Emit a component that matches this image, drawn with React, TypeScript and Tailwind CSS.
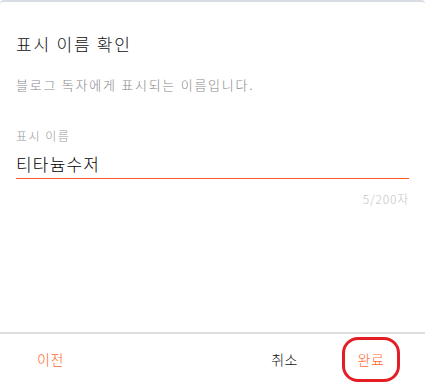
import React from "react";

const font = { fontFamily: '"Noto Sans CJK KR", "Noto Sans", sans-serif' };

export default function App() {
  return (
    <div
      className="w-[425px] h-[384px] bg-white flex flex-col overflow-hidden rounded-t-[4px] border-t-2 border-[#d8dde3]"
      style={font}
    >
      {/* Body */}
      <div className="flex-1 flex flex-col px-4">
        <h2 className="mt-[30px] text-[17px] leading-6 tracking-[1.8px] font-light text-[#111]">
          표시 이름 확인
        </h2>
        <p className="mt-[19px] text-[13px] leading-5 tracking-[1.75px] font-light text-[#888]">
          블로그 독자에게 표시되는 이름입니다.
        </p>

        <label className="mt-[33px] text-[12px] leading-4 tracking-[1.5px] font-light text-[#999]">
          표시 이름
        </label>
        <div className="mt-[8px] border-b border-[#ff5722] pb-[2px]">
          <div className="text-[17px] leading-6 tracking-[1.2px] font-light text-black">티타늄수저</div>
        </div>
        <div className="mt-[12px] text-right text-[12px] leading-4 tracking-[0.8px] font-light text-[#c4c4c4]">
          5/200자
        </div>
      </div>

      {/* Footer */}
      <div className="h-[52px] border-t-2 border-[#dedede] flex items-center px-4">
        <button className="ml-[21px] text-[14px] tracking-[0.5px] font-light text-[#ff6a2c]">이전</button>
        <div className="flex-1" />
        <button className="text-[14px] tracking-[0.5px] font-light text-[#111] mr-[44px]">취소</button>
        <div className="mr-[9px] w-[58px] h-[45px] rounded-[16px] border-[3px] border-[#e41e26] flex items-center justify-center">
          <button className="text-[14px] tracking-[0.5px] font-light text-[#ff6a2c]">완료</button>
        </div>
      </div>
    </div>
  );
}
